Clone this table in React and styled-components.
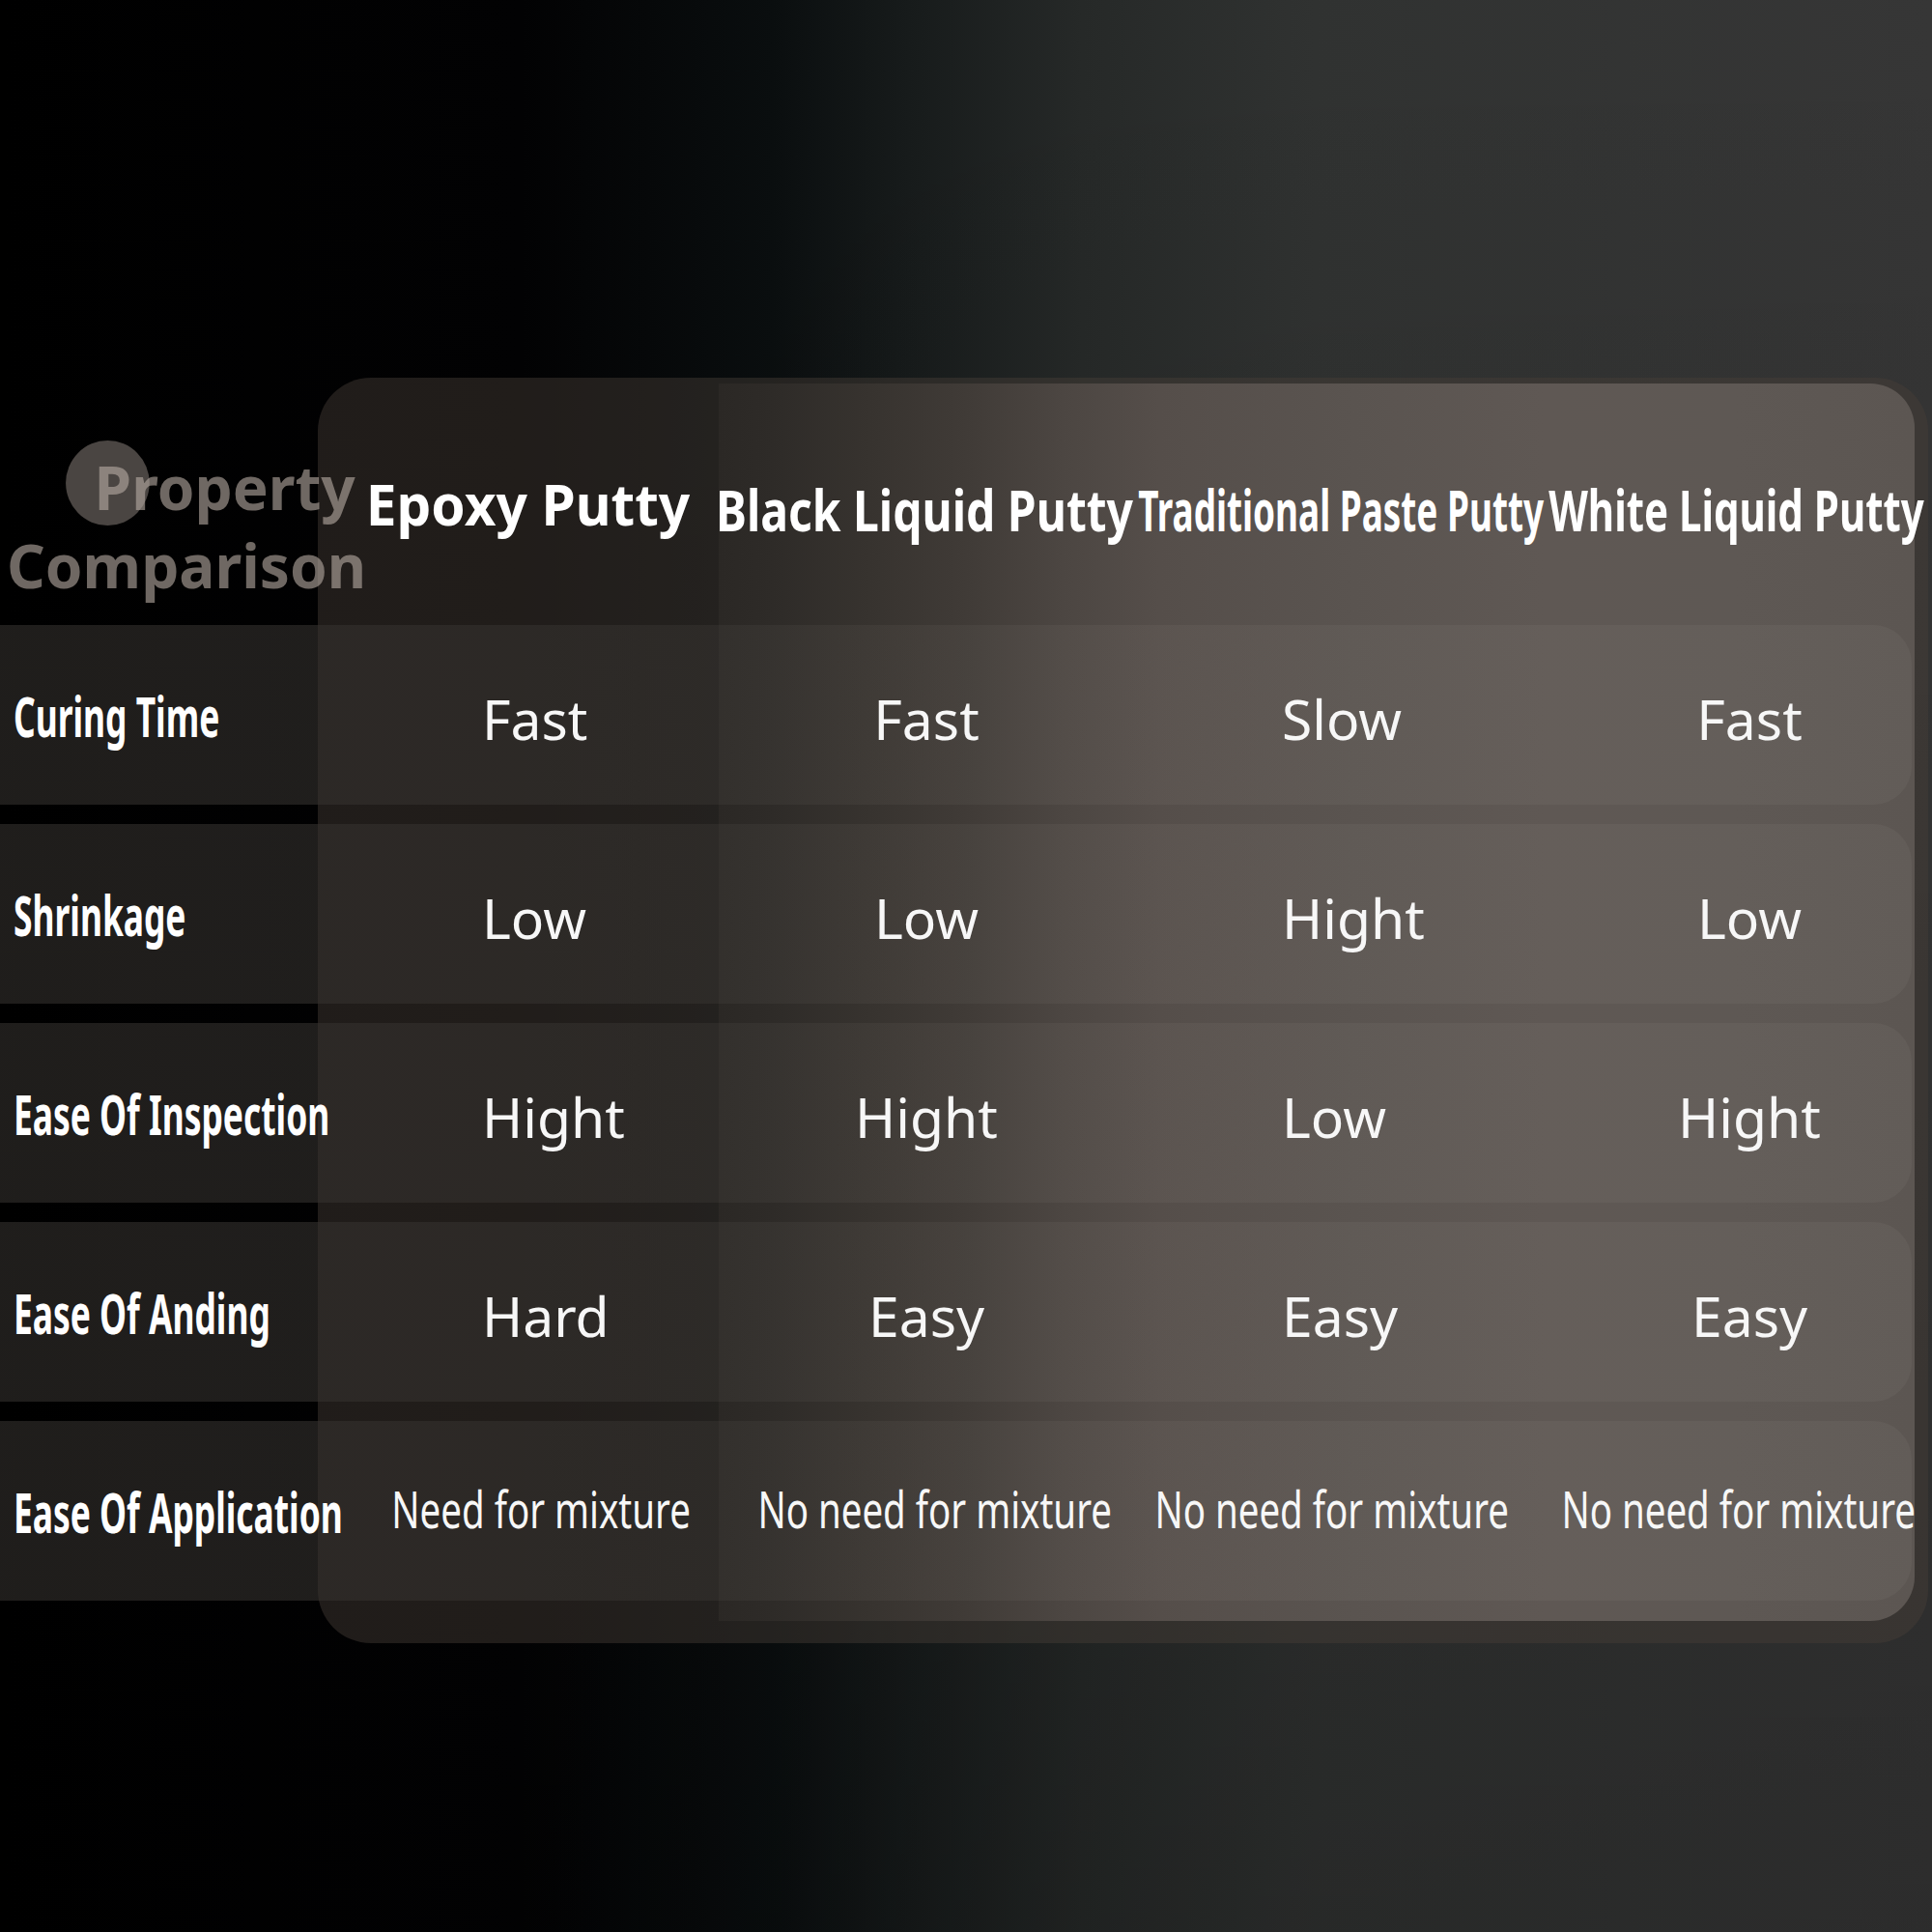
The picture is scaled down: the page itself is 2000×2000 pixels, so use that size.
import styled, { createGlobalStyle } from "styled-components";

// --- Global ---
const GlobalStyle = createGlobalStyle`
  html, body {
    margin: 0;
    padding: 0;
    background: #000;
  }
  body {
    font-family: "Noto Sans", "Open Sans", sans-serif;
  }
`;

// --- Styled Components ---
const Page = styled.main`
  width: 2000px;
  height: 2000px;
  box-sizing: border-box;
  padding-top: 391px;
  overflow: hidden;
  background:
    linear-gradient(180deg, rgba(0, 0, 0, 0) 0%, rgba(0, 0, 0, 0.18) 100%),
    linear-gradient(90deg, #000 0%, #020203 27%, #0a0e0f 40%, #171b1b 47%, #262928 56%, #303231 68%, #363636 100%);
`;

const Table = styled.section`
  display: grid;
  grid-template-columns: 329px 415px 436px 420px 382px;
  grid-template-rows: 236px repeat(5, 186px);
  row-gap: 20px;
`;

/* tarjeta oscura detras de las columnas */
const CardBack = styled.div`
  grid-column: 2 / -1;
  grid-row: 1 / -1;
  margin: 0 -14px -44px 0;
  border-radius: 55px;
  background: rgba(70, 62, 56, 0.45);
  z-index: 0;
`;

/* panel claro de las 3 ultimas columnas */
const InnerPanel = styled.div`
  grid-column: 3 / -1;
  grid-row: 1 / -1;
  margin: 6px 0 -21px 0;
  border-radius: 0 46px 46px 0;
  background: linear-gradient(
    90deg,
    #2b2825 0%,
    #2e2b28 4.5%,
    #37332f 12.6%,
    #403b37 20.7%,
    #4c4642 28.8%,
    #554e4a 36.8%,
    #5a5450 53%,
    #5f5854 69%,
    #5e5854 85%,
    #5c5652 100%
  );
  z-index: 1;
`;

const RowBand = styled.div`
  grid-column: 1 / -1;
  grid-row: ${(p) => p.$row};
  margin-right: 3px;
  border-radius: 0 40px 40px 0;
  background: linear-gradient(
    90deg,
    rgba(52, 49, 46, 0.6) 744px,
    rgba(255, 245, 235, 0.04) 744px
  );
  z-index: 2;
`;

const TitleCell = styled.div`
  grid-column: 1;
  grid-row: 1;
  align-self: end;
  margin-bottom: 2px;
  padding-left: 7px;
  z-index: 3;
  font-size: 63px;
  font-weight: 700;
  line-height: 81px;
  color: rgba(185, 173, 165, 0.6);
  white-space: nowrap;
`;

const TitleLine = styled.div`
  position: relative;
  padding-left: ${(p) => p.$indent || 0}px;
  transform: scaleX(0.985);
  transform-origin: left center;

  &::before {
    content: "";
    display: ${(p) => (p.$dot ? "block" : "none")};
    position: absolute;
    left: 62px;
    top: -7px;
    width: 88px;
    height: 88px;
    border-radius: 50%;
    background: #4a4542;
    z-index: -1;
  }
`;

const HeadCell = styled.div`
  grid-column: ${(p) => p.$col};
  grid-row: 1;
  align-self: start;
  display: flex;
  justify-content: center;
  margin-top: ${(p) => p.$drop}px;
  padding: 0 ${(p) => Math.max(0, -p.$shift) * 2}px 0 ${(p) => Math.max(0, p.$shift) * 2}px;
  z-index: 3;
  font-size: 60px;
  font-weight: 700;
  line-height: 60px;
  color: #ffffff;
`;

const LabelCell = styled.div`
  grid-column: 1;
  grid-row: ${(p) => p.$row};
  display: flex;
  align-items: center;
  padding-left: 14px;
  z-index: 3;
  font-size: 58px;
  font-weight: 700;
  color: #ffffff;
`;

/* $start: columna alineada a la izquierda desde ese padding, si no centrada */
const ValueCell = styled.div`
  grid-column: ${(p) => p.$col};
  grid-row: ${(p) => p.$row};
  display: flex;
  align-items: center;
  justify-content: ${(p) => (p.$start != null ? "flex-start" : "center")};
  padding-left: ${(p) => (p.$start != null ? p.$start : Math.max(0, p.$shift) * 2)}px;
  padding-right: ${(p) => (p.$start != null ? 0 : Math.max(0, -p.$shift) * 2)}px;
  padding-top: ${(p) => (p.$small ? 0 : 8)}px;
  padding-bottom: ${(p) => (p.$small ? 6 : 0)}px;
  z-index: 3;
  font-size: ${(p) => (p.$small ? 52 : 57)}px;
  font-weight: 400;
  color: #f7f7f7;
`;

const Squeeze = styled.span`
  display: inline-block;
  white-space: nowrap;
  transform: scaleX(${(p) => p.$sx || 1});
  transform-origin: ${(p) => p.$origin || "center"} center;
`;

// --- Datos ---
const headers = [
  { text: "Epoxy Putty", sx: 0.945, drop: 100, shift: 10 },
  { text: "Black Liquid Putty", sx: 0.8, drop: 106, shift: -5 },
  { text: "Traditional Paste Putty", sx: 0.615, drop: 106, shift: -2 },
  { text: "White Liquid Putty", sx: 0.7, drop: 106, shift: 6 },
];

// columnas 1 y 3 van alineadas a la izquierda en el original
const valueCols = [{ start: 170 }, { shift: -3 }, { start: 147 }, { shift: 20 }];
const smallCols = [{ shift: 24 }, { shift: 6 }, { shift: -11 }, { shift: 9 }];

const rows = [
  { label: "Curing Time", values: ["Fast", "Fast", "Slow", "Fast"] },
  { label: "Shrinkage", values: ["Low", "Low", "Hight", "Low"] },
  { label: "Ease Of Inspection", values: ["Hight", "Hight", "Low", "Hight"] },
  { label: "Ease Of Anding", values: ["Hard", "Easy", "Easy", "Easy"] },
  {
    label: "Ease Of Application",
    values: ["Need for mixture", "No need for mixture", "No need for mixture", "No need for mixture"],
    small: true,
  },
];

// --- Componente ---
const RowGroup = ({ row, gridRow }) => (
  <>
    <RowBand $row={gridRow} />
    <LabelCell $row={gridRow}>
      <Squeeze $sx={0.61} $origin="left">{row.label}</Squeeze>
    </LabelCell>
    {row.values.map((v, c) => {
      const col = row.small ? smallCols[c] : valueCols[c];
      return (
        <ValueCell
          key={c}
          $row={gridRow}
          $col={c + 2}
          $small={row.small}
          $start={col.start}
          $shift={col.shift || 0}
        >
          <Squeeze $sx={row.small ? 0.74 : 1} $origin={col.start != null ? "left" : "center"}>
            {v}
          </Squeeze>
        </ValueCell>
      );
    })}
  </>
);

const App = () => {
  return (
    <Page>
      <GlobalStyle />
      <Table>
        <CardBack />
        <InnerPanel />

        <TitleCell>
          <TitleLine $indent={92} $dot>Property</TitleLine>
          <TitleLine>Comparison</TitleLine>
        </TitleCell>

        {headers.map((h, i) => (
          <HeadCell key={h.text} $col={i + 2} $drop={h.drop} $shift={h.shift}>
            <Squeeze $sx={h.sx}>{h.text}</Squeeze>
          </HeadCell>
        ))}

        {rows.map((row, r) => (
          <RowGroup key={row.label} row={row} gridRow={r + 2} />
        ))}
      </Table>
    </Page>
  );
};

export default App;
